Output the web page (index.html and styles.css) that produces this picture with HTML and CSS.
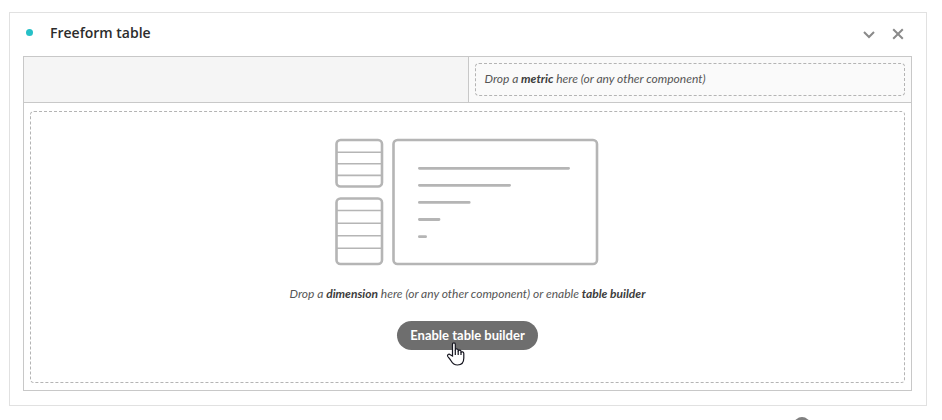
FILE: index.html
```html
<!DOCTYPE html>
<html lang="en">
<head>
    <meta charset="UTF-8">
    <meta name="viewport" content="width=device-width, initial-scale=1.0">
    <title>Freeform table</title>
    <link rel="stylesheet" href="styles.css">
</head>
<body>
    <main class="workspace">
        <section class="panel">
            <header class="panel-header">
                <span class="status-dot"></span>
                <h2>Freeform table</h2>
                <button class="icon-button" type="button" aria-label="Collapse">
                    <svg width="12" height="12" viewBox="0 0 12 12"><path d="M1 4 L6 9 L11 4"/></svg>
                </button>
                <button class="icon-button" type="button" aria-label="Close">
                    <svg width="12" height="12" viewBox="0 0 12 12"><path d="M1.2 1.2 L10.8 10.8 M10.8 1.2 L1.2 10.8"/></svg>
                </button>
            </header>

            <div class="builder">
                <div class="builder-head">
                    <div class="corner-cell"></div>
                    <div class="metric-cell">
                        <p class="drop-zone metric-zone">Drop a <strong>metric</strong> here (or any other component)</p>
                    </div>
                </div>
                <div class="builder-body">
                    <div class="drop-zone dimension-zone">
                        <svg class="illustration" width="266" height="128" viewBox="0 0 266 128">
                            <g stroke-width="2.6">
                                <rect x="1.5" y="2" width="45.5" height="46.5" rx="4"/>
                                <rect x="1.5" y="60.5" width="45.5" height="65.5" rx="4"/>
                                <rect x="58.5" y="2" width="203.5" height="124" rx="4"/>
                            </g>
                            <path stroke-width="1.6" d="M2 14.2 H46 M2 25.8 H46 M2 37.4 H46 M2 72.5 H46 M2 85.2 H46 M2 97.8 H46 M2 110.2 H46"/>
                            <path stroke-width="2.8" stroke-linecap="round" d="M84.4 30.3 H233.6 M84.4 47.3 H174.6 M84.4 64.4 H134.2 M84.4 81.5 H104 M84.4 98.7 H90.6"/>
                        </svg>
                        <p>Drop a <strong>dimension</strong> here (or any other component) or enable <strong>table builder</strong></p>
                        <button class="enable-button" type="button">
                            Enable table builder
                            <svg class="pointer" width="20" height="26" viewBox="0 0 20 26">
                                <path d="M6.5 15 V3.5 C6.5 1.2 9.3 1.2 9.3 3.5 V10 V8.8 C9.5 7.3 12.2 7.5 12.2 9.4 V10.4 C12.5 8.6 15 8.9 15 10.6 V11.6 C15.5 10.3 17.8 10.6 17.8 12.4 V17 C17.8 22 15.3 24 11.5 24 C7.8 24 6.4 22.3 5 19.8 C4 18 2.8 16.8 1.8 15.5 C.8 13.8 2.8 12.4 4.3 13.7 Z"/>
                                <path d="M9.3 9.5 V14 M12.2 10 V14 M15 11 V14"/>
                            </svg>
                        </button>
                    </div>
                </div>
            </div>
        </section>
        <button class="add-button" type="button" aria-label="Add"></button>
    </main>
</body>
</html>
```
FILE: styles.css
```css
* {
    box-sizing: border-box;
}
body {
    margin: 0;
    overflow: hidden;
    font-family: Lato, "Open Sans", sans-serif;
    background-color: #fff;
    color: #555;
}
h2, p {
    margin: 0;
}
button {
    border: none;
    font-family: inherit;
    cursor: pointer;
}
.workspace {
    padding: 12px 15px 0 9px;
}
.panel {
    padding: 0 14px 14px 13px;
    border: 1px solid #e1e1e1;
}
.panel-header {
    display: flex;
    align-items: center;
    height: 43px;
    padding: 0 8px 2px 3px;
}
.status-dot {
    width: 7px;
    height: 7px;
    margin-bottom: 2px;
    border-radius: 50%;
    background-color: #26c0c7;
}
h2 {
    flex: 1;
    margin-left: 17px;
    padding-bottom: 2px;
    font-family: "Open Sans", "Noto Sans", sans-serif;
    font-size: 14px;
    font-weight: 600;
    line-height: 20px;
    color: #2c2c2c;
}
.icon-button {
    display: flex;
    margin-left: 17px;
    padding: 0;
    background: none;
}
.icon-button svg {
    fill: none;
    stroke: #8a8a8a;
    stroke-width: 2;
}
.builder {
    border: 1px solid #c8c8c8;
}
.builder-head {
    display: grid;
    grid-template-columns: 1fr 1fr;
    border-bottom: 1px solid #c8c8c8;
    background-color: #f5f5f5;
}
.metric-cell {
    padding: 6px;
    border-left: 1px solid #c8c8c8;
    background-color: #fafafa;
}
.drop-zone {
    border: 1px dashed #b4b4b4;
    border-radius: 4px;
    font-size: 12px;
    font-style: italic;
    line-height: 16px;
}
.drop-zone strong {
    font-weight: 700;
    color: #3c3c3c;
}
.metric-zone {
    padding: 7px 9px 8px;
}
.builder-body {
    padding: 8px 6px 7px;
}
.dimension-zone {
    display: flex;
    flex-direction: column;
    align-items: center;
    padding: 26px 16px 32px;
}
.illustration {
    margin-bottom: 20px;
    fill: none;
    stroke: #b5b5b5;
}
.enable-button {
    position: relative;
    margin-top: 19px;
    padding: 0 13px;
    border-radius: 15px;
    background-color: #6e6e6e;
    color: #fff;
    font-size: 13px;
    font-weight: 700;
    line-height: 29px;
}
/* hand cursor resting on the button */
.pointer {
    position: absolute;
    top: 20px;
    left: 49px;
    fill: #fff;
    stroke: #15151f;
    stroke-width: 1.2;
}
.add-button {
    display: block;
    width: 16px;
    height: 16px;
    margin: 11px 117px 0 auto;
    border-radius: 50%;
    background-color: #808080;
}
```
